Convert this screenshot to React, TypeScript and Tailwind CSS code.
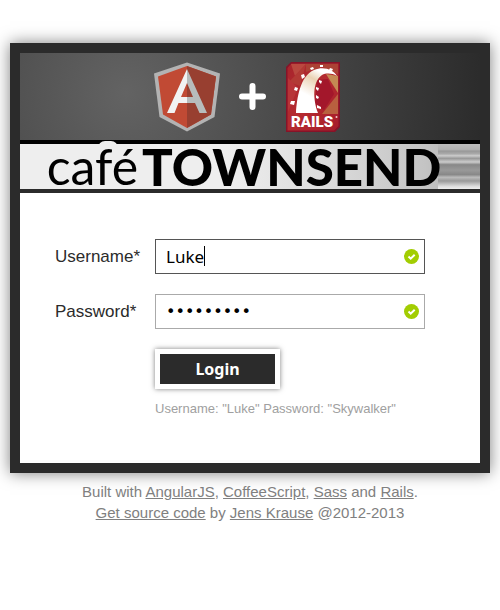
import { useState } from 'react';

function AngularLogo() {
  return (
    <svg width="66" height="70" viewBox="0 0 66 70" role="img" aria-label="AngularJS">
      <path d="M33 0.500 66 11.500 60.500 55 33 69.500 5.500 55 0 11.500Z" fill="#b3b3b3" />
      <path d="M33 4 62 14.500 57 52.500 33 66 9 52.500 4 14.500Z" fill="#c14a34" />
      <path d="M33 4 62 14.500 57 52.500 33 66Z" fill="#983f30" />
      <path d="M33 7 13 51h7.500l4-10H33v-6h-6l6-14Z" fill="#f2f2f2" />
      <path d="M33 7 53 51h-7.500l-4.500-10H33v-6h6l-6-14Z" fill="#b7bcbc" />
    </svg>
  );
}

function RailsLogo() {
  return (
    <svg width="54" height="70" viewBox="0 0 54 70" role="img" aria-label="Rails">
      <defs>
        <linearGradient id="track" x1="0.2" y1="1" x2="0.7" y2="0">
          <stop offset="0" stopColor="#fff" />
          <stop offset=".35" stopColor="#fff" />
          <stop offset=".7" stopColor="#ead2b4" />
          <stop offset=".9" stopColor="#fff" />
        </linearGradient>
        <linearGradient id="gem" x1="0" y1="0" x2="1" y2="1">
          <stop offset="0" stopColor="#a8242c" />
          <stop offset=".5" stopColor="#b52b30" />
          <stop offset="1" stopColor="#a61c2b" />
        </linearGradient>
      </defs>
      <path d="M5 0H54V65L49 70H0V5Z" fill="#861328" />
      <path d="M5.500 1.500H52.500V64L48 68.500H1.500V6Z" fill="url(#gem)" />
      <path d="M5 2H20L9 14Z" fill="#b9483f" />
      <path d="M20 2 3 20 14 24Z" fill="#b23a35" />
      <path d="M20 2H52V12L36 5 20 10Z" fill="#ab4235" />
      <path d="M40 12 52 14V31L45 20Z" fill="#c58a53" />
      <path d="M52 32 36 52H52Z" fill="#b9603f" />
      <path d="M2 16 12 26 2 50Z" fill="#b83438" />
      <path d="M31 18 42 17 48 32 38 48 29 42Z" fill="#a3172b" />
      <path d="M10 51C11 36 14 14 28 8 37 4 47 7 51 14 46 11 40 11 36 13 26 20 27 38 32 51Z" fill="url(#track)" />
      <g fill="#fff">
        <path d="m15 13 3-1 1 3-3 2zM24 6l3-1 1 2-3 1zM34 3h3v2h-3zM44 6l3 1-1 2-3-1zM9 25l3 1-1 3-3-1zM5 39l4 0-1 4-4-1z" />
        <path d="m33 18 3 1-1 3-2-2zM30 25l3 1-1 3-2-2zM30 33l3 2-1 2-2-1zM31 43l4 2 0 2-4-1z" />
      </g>
      <text x="5" y="65" fill="#fff" fontFamily="Roboto, sans-serif" fontWeight="900" fontSize="15">RAILS</text>
      <circle cx="50.500" cy="55" r="1" fill="#f1c9c9" />
    </svg>
  );
}

function ValidMark() {
  return (
    <svg className="pointer-events-none absolute top-[10px] right-[6px]" width="15" height="15" viewBox="0 0 15 15" aria-hidden="true">
      <circle cx="7.500" cy="7.500" r="7.500" fill="#a2cd02" />
      <path d="m4.500 7.500 2.200 2.200L10.700 5.700" stroke="#fff" strokeWidth="2" fill="none" />
    </svg>
  );
}

function Field({ id, label, type, value, onChange }: {
  id: string;
  label: string;
  type: string;
  value: string;
  onChange: (value: string) => void;
}) {
  const isName = type === 'text';
  return (
    <div className="flex items-center">
      <label htmlFor={id} className="w-[100px] shrink-0 text-[17px] text-[#2b2b2b]">{label}</label>
      <div className="relative min-w-0 max-w-[270px] flex-1">
        <input
          id={id}
          type={type}
          value={value}
          onChange={(e) => onChange(e.target.value)}
          className={`block h-[35px] w-full border bg-white px-[10px] text-black caret-transparent outline-none ${isName ? "border-[#555] font-['Noto_Sans',sans-serif] text-[17px]" : "border-[#aaa] font-['DejaVu_Sans',sans-serif] text-[16px]"}`}
        />
        {isName && (
          <span aria-hidden="true" className="pointer-events-none absolute top-[7px] left-[11px] flex h-[20px] font-['Noto_Sans',sans-serif] text-[17px] leading-[20px]">
            <span className="invisible whitespace-pre">{value}</span>
            <span className="w-px bg-black" />
          </span>
        )}
        <ValidMark />
      </div>
    </div>
  );
}

export default function App() {
  const [name, setName] = useState('Luke');
  const [password, setPassword] = useState('Skywalker');
  return (
    <div className="bg-white px-[10px] pt-[43px] font-['Liberation_Sans',Arial,sans-serif]">
      <main className="border-[10px] border-[#2b2b2b] bg-white shadow-[0_0_15px_rgba(0,0,0,0.5)]">
        <header>
          <div className="flex h-[87px] items-center justify-center bg-[radial-gradient(circle_at_23%_46%,#636363,#2b2b2b_360px)] pr-[6px]">
            <AngularLogo />
            <svg className="mr-[20px] ml-[19px]" width="27" height="27" viewBox="0 0 27 27" aria-hidden="true">
              <path d="M13.500 3v21M3 13.500h21" stroke="#fff" strokeWidth="6" strokeLinecap="round" />
            </svg>
            <RailsLogo />
          </div>
          <h1 className="relative flex h-[53px] items-center justify-center border-t-4 border-b-4 border-t-black border-b-[#2b2b2b] bg-[linear-gradient(90deg,#eee_0%,#eee_45%,#ddd_65%,#c4c4c4_88%,#aaa_100%)] pr-[12px] font-['Lato',sans-serif] text-[51px] leading-[45px] whitespace-nowrap text-black">
            <span className="absolute inset-y-0 right-0 w-[42px] bg-[linear-gradient(180deg,#bbb_0%,#b0b0b0_12%,#999_16%,#aaa_22%,#ccc_26%,#999_32%,#ccc_40%,#888_46%,#999_58%,#888_68%,#bbb_74%,#999_82%,#bbb_88%,#ddd_94%,#eee_100%)]" aria-hidden="true" />
            <span className="relative text-[50px] font-normal">
              <span className="absolute top-[-3px] left-[51px] h-[14px] w-[20px] rounded-full bg-[#eee]" aria-hidden="true" />
              <span className="relative">café</span>
            </span>
            <span className="relative ml-[4px] font-black">TOWNSEND</span>
          </h1>
        </header>
        <form className="px-[35px] pt-[46px] pb-[44px]" onSubmit={(e) => e.preventDefault()}>
          <div className="flex flex-col gap-5">
            <Field id="username" label="Username*" type="text" value={name} onChange={setName} />
            <Field id="password" label="Password*" type="password" value={password} onChange={setPassword} />
          </div>
          <div className="mt-5 ml-[100px]">
            <button type="submit" className="block h-[40px] w-[125px] border-[5px] border-white bg-[#2b2b2b] font-['Noto_Sans',sans-serif] text-[16px] leading-[30px] font-bold text-white shadow-[0_0_5px_rgba(0,0,0,0.5)]">Login</button>
            <p className="mt-[10px] text-[13px] leading-[20px] text-[#a0a0a0]">Username: "Luke" Password: "Skywalker"</p>
          </div>
        </form>
      </main>
      <footer className="pt-[8px] text-center text-[15px] leading-[21px] text-[#808080]">
        <p>
          Built with <a className="underline" href="#angular">AngularJS</a>, <a className="underline" href="#coffee">CoffeeScript</a>, <a className="underline" href="#sass">Sass</a> and <a className="underline" href="#rails">Rails</a>.
        </p>
        <p>
          <a className="underline" href="#source">Get source code</a> by <a className="underline" href="#author">Jens Krause</a> @2012-2013
        </p>
      </footer>
    </div>
  );
}
